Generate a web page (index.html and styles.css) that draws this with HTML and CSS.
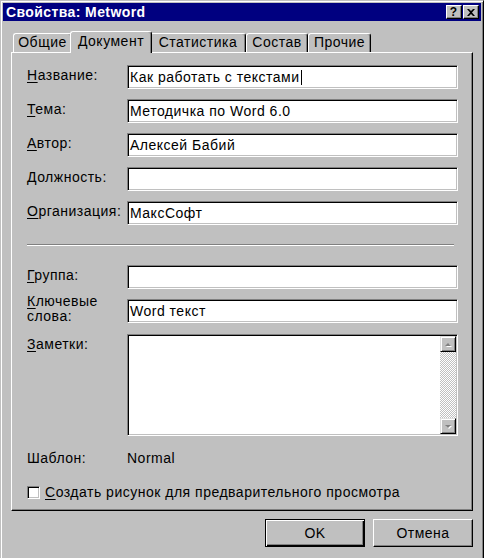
FILE: index.html
```html
<!DOCTYPE html>
<html lang="ru">
<head>
<meta charset="utf-8">
<title>Свойства: Metword</title>
<link rel="stylesheet" href="styles.css">
</head>
<body>
<div class="window">
  <div class="titlebar">
    <span class="title">Свойства: Metword</span>
    <div class="title-buttons">
      <div class="tbtn tbtn-help">?</div>
      <div class="tbtn">
        <svg width="8" height="7" viewBox="0 0 8 7"><path d="M0 0h2l2 2 2-2h2L5 3.5 8 7H6L4 5 2 7H0l3-3.5z" fill="#000"/></svg>
      </div>
    </div>
  </div>
  <div class="body">
    <div class="tabs">
      <div class="tab tab-general">Общие</div>
      <div class="tab tab-doc active">Документ</div>
      <div class="tab tab-stat">Статистика</div>
      <div class="tab tab-content">Состав</div>
      <div class="tab tab-other">Прочие</div>
    </div>
    <div class="panel">
      <div class="field-row">
        <span class="label"><u>Н</u>азвание:</span>
        <div class="input">Как работать с текстами<span class="caret"></span></div>
      </div>
      <div class="field-row">
        <span class="label"><u>Т</u>ема:</span>
        <div class="input">Методичка по Word 6.0</div>
      </div>
      <div class="field-row">
        <span class="label"><u>А</u>втор:</span>
        <div class="input">Алексей Бабий</div>
      </div>
      <div class="field-row">
        <span class="label"><u>Д</u>олжность:</span>
        <div class="input"></div>
      </div>
      <div class="field-row">
        <span class="label"><u>О</u>рганизация:</span>
        <div class="input">МаксСофт</div>
      </div>
      <div class="separator"></div>
      <div class="field-row">
        <span class="label"><u>Г</u>руппа:</span>
        <div class="input"></div>
      </div>
      <div class="field-row">
        <span class="label label-two"><u>К</u>лючевые<br>слова:</span>
        <div class="input">Word текст</div>
      </div>
      <div class="field-row">
        <span class="label"><u>З</u>аметки:</span>
        <div class="textarea">
          <div class="notes"></div>
          <div class="scrollbar">
            <div class="sbtn">
              <svg width="8" height="5" viewBox="0 0 8 5"><path d="M4 1L7 4H1z" fill="#fff" transform="translate(1 1)"/><path d="M4 0L7 3H1z" fill="#808080" transform="translate(0 1)"/></svg>
            </div>
            <div class="track"></div>
            <div class="sbtn">
              <svg width="8" height="5" viewBox="0 0 8 5"><path d="M1 1h6L4 4z" fill="#fff" transform="translate(1 1)"/><path d="M1 0h6L4 3z" fill="#808080" transform="translate(0 1)"/></svg>
            </div>
          </div>
        </div>
      </div>
      <div class="info-row">
        <span class="label">Шаблон:</span>
        <span>Normal</span>
      </div>
      <div class="check-row">
        <span class="checkbox"></span>
        <span><u>С</u>оздать рисунок для предварительного просмотра</span>
      </div>
    </div>
    <div class="buttons">
      <div class="btn btn-default">OK</div>
      <div class="btn">Отмена</div>
    </div>
  </div>
</div>
</body>
</html>
```
FILE: styles.css
```css
* { box-sizing: border-box; }

body {
  margin: 0;
  background: #c0c0c0;
  font-family: "Liberation Sans", Arial, sans-serif;
  font-size: 14px;
  letter-spacing: 0.5px;
  color: #000;
}

u { text-decoration: underline; text-underline-offset: 2px; }

.window {
  width: 484px;
  height: 564px;
  background: #c0c0c0;
  border: 1px solid;
  border-color: #c0c0c0 #000 #000 #c0c0c0;
  box-shadow: inset 1px 1px #fff, inset -1px -1px #808080;
  padding: 2px;
  overflow: hidden;
}

.titlebar {
  height: 18px;
  background: #000080;
  display: flex;
  align-items: center;
  justify-content: space-between;
  padding: 0 2px 0 3px;
}

.title {
  color: #fff;
  font-weight: bold;
  font-size: 14px;
  letter-spacing: 0.4px;
  line-height: 18px;
}

.title-buttons {
  display: flex;
  gap: 1px;
}

.tbtn {
  width: 16px;
  height: 14px;
  background: #c0c0c0;
  border: 1px solid;
  border-color: #fff #000 #000 #fff;
  box-shadow: inset -1px -1px #808080;
  display: flex;
  align-items: center;
  justify-content: center;
  padding-right: 1px;
  letter-spacing: 0;
}

.tbtn-help {
  font-weight: bold;
  font-size: 12px;
  line-height: 12px;
}

.body {
  padding: 10px 8px 0 8px;
}

.tabs {
  display: flex;
  align-items: flex-end;
  height: 21px;
  padding-left: 2px;
}

.tab {
  height: 19px;
  background: #c0c0c0;
  border-top: 1px solid #fff;
  border-left: 1px solid #fff;
  border-right: 1px solid #000;
  box-shadow: inset -1px 0 #808080;
  border-radius: 3px 3px 0 0;
  text-align: center;
  line-height: 17px;
  white-space: nowrap;
}

.tab.active {
  height: 22px;
  margin: 0 -2px -1px;
  position: relative;
  z-index: 1;
  line-height: 18px;
}

.tab-general { width: 59px; }
.tab-doc { width: 82px; }
.tab-stat { width: 96px; }
.tab-content { width: 62px; }
.tab-other { width: 63px; }

.panel {
  height: 459px;
  border: 1px solid;
  border-color: #fff #000 #000 #fff;
  box-shadow: inset -1px -1px #808080;
  padding: 12px 14px 0 15px;
  display: flex;
  flex-direction: column;
}

.field-row {
  display: flex;
  align-items: flex-start;
  margin-bottom: 10px;
}

.label {
  width: 100px;
  flex: none;
  line-height: 16px;
  padding-top: 2px;
  white-space: nowrap;
}

.label-two {
  line-height: 15px;
  margin-top: -5px;
  padding-top: 0;
}

.input {
  flex: 1;
  height: 24px;
  background: #fff;
  border: 1px solid;
  border-color: #808080 #fff #fff #808080;
  box-shadow: inset 1px 1px #000, inset -1px -1px #c0c0c0;
  padding: 0 2px;
  line-height: 22px;
  white-space: nowrap;
}

.caret {
  display: inline-block;
  width: 1px;
  height: 15px;
  background: #000;
  vertical-align: -3px;
  margin-left: 1px;
}

.separator {
  margin: 9px 4px 19px 0;
  border-top: 1px solid #808080;
  border-bottom: 1px solid #fff;
}

.textarea {
  flex: 1;
  height: 102px;
  background: #fff;
  border: 1px solid;
  border-color: #808080 #fff #fff #808080;
  box-shadow: inset 1px 1px #000, inset -1px -1px #c0c0c0;
  padding: 1px;
  display: flex;
}

.notes { flex: 1; }

.scrollbar {
  width: 16px;
  display: flex;
  flex-direction: column;
}

.sbtn {
  width: 16px;
  height: 16px;
  background: #c0c0c0;
  border: 1px solid;
  border-color: #dfdfdf #000 #000 #dfdfdf;
  box-shadow: inset 1px 1px #fff, inset -1px -1px #808080;
  display: flex;
  align-items: center;
  justify-content: center;
}

.track {
  flex: 1;
  background: repeating-conic-gradient(#c0c0c0 0 25%, #fff 0 50%) 0 0 / 2px 2px;
}

.info-row {
  display: flex;
  line-height: 16px;
  margin-top: 4px;
}

.info-row .label { padding-top: 0; }

.check-row {
  display: flex;
  align-items: center;
  gap: 5px;
  margin-top: 18px;
  line-height: 16px;
}

.checkbox {
  width: 13px;
  height: 13px;
  flex: none;
  background: #fff;
  border: 1px solid;
  border-color: #808080 #fff #fff #808080;
  box-shadow: inset 1px 1px #000, inset -1px -1px #c0c0c0;
}

.buttons {
  display: flex;
  justify-content: flex-end;
  gap: 8px;
  margin-top: 8px;
}

.btn {
  width: 100px;
  height: 28px;
  background: #c0c0c0;
  border: 1px solid;
  border-color: #fff #000 #000 #fff;
  box-shadow: inset -1px -1px #808080;
  text-align: center;
  line-height: 26px;
}

.btn-default {
  border-color: #000;
  box-shadow: inset 1px 1px #fff, inset -1px -1px #000, inset -2px -2px #808080;
}
```
